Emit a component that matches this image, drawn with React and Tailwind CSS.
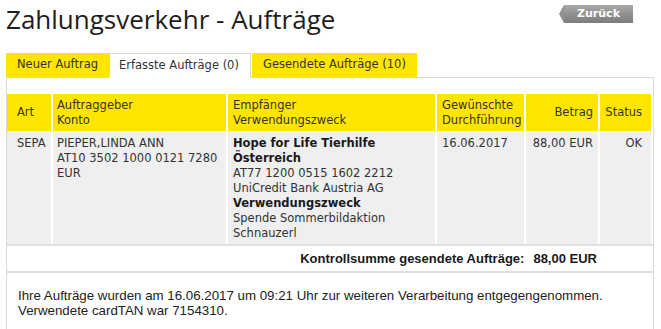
export default function App() {
  const sans = "font-['DejaVu_Sans',sans-serif]";
  return (
    <div className="w-[661px] h-[329px] overflow-hidden bg-white pl-[6px] pr-[7px] text-[#2b2b2b]">
      <div className="flex justify-between items-start">
        <h1 className="pt-[6px] text-[26px] leading-[26px] font-['Open_Sans',sans-serif] font-normal text-[#1e1e1e]">
          Zahlungsverkehr - Aufträge
        </h1>
        <div className="mt-[5px] mr-[21px] flex">
          <div className="w-0 h-0 border-y-[9px] border-y-transparent border-r-[5px] border-r-[#929292]"></div>
          <div className={`w-[69px] h-[18px] bg-gradient-to-b from-[#a8a8a8] to-[#7c7c7c] text-white font-bold text-[11px] leading-[18px] text-center ${sans}`}>
            Zurück
          </div>
        </div>
      </div>

      <div className={`mt-[21px] flex items-end text-[11.5px] ${sans} text-[#333]`}>
        <div className="w-[103px] h-[24px] bg-[#ffe500] pl-[11px] flex items-center">Neuer Auftrag</div>
        <div className="w-[142px] h-[25px] -mb-px bg-white border border-b-0 border-[#d6d6d6] pl-[9px] flex items-center relative z-10">
          Erfasste Aufträge (0)
        </div>
        <div className="ml-[1px] w-[165px] h-[24px] bg-[#ffe500] pl-[11px] flex items-center">Gesendete Aufträge (10)</div>
      </div>

      <div className="border border-b-0 border-[#d9d9d9] pt-[16px] pb-[30px]">
        <div className={`grid grid-cols-[44px_173px_207px_87px_72px_51px] gap-x-[2px] text-[11.5px] leading-[15px] ${sans} text-[#333]`}>
          <div className="h-[37px] bg-[#ffe500] pl-[10px] flex items-center">Art</div>
          <div className="h-[37px] bg-[#ffe500] pl-[4px] flex items-center">Auftraggeber<br />Konto</div>
          <div className="h-[37px] bg-[#ffe500] pl-[5px] flex items-center">Empfänger<br />Verwendungszweck</div>
          <div className="h-[37px] bg-[#ffe500] pl-[5px] flex items-center whitespace-nowrap">Gewünschte<br />Durchführung</div>
          <div className="h-[37px] bg-[#ffe500] pr-[5px] flex items-center justify-end">Betrag</div>
          <div className="h-[37px] bg-[#ffe500] pr-[9px] flex items-center justify-end">Status</div>

          <div className="bg-[#efefef] pl-[10px] pt-[5px] pb-[3px]">SEPA</div>
          <div className="bg-[#efefef] pl-[4px] pt-[5px] pb-[3px] whitespace-nowrap">
            PIEPER,LINDA ANN<br />AT10 3502 1000 0121 7280<br />EUR
          </div>
          <div className="bg-[#efefef] pl-[5px] pt-[5px] pb-[3px] whitespace-nowrap">
            <span className="font-bold text-[#1a1a1a]">Hope for Life Tierhilfe<br />Österreich</span><br />
            AT77 1200 0515 1602 2212<br />
            UniCredit Bank Austria AG<br />
            <span className="font-bold text-[#1a1a1a]">Verwendungszweck</span><br />
            Spende Sommerbildaktion<br />
            Schnauzerl
          </div>
          <div className="bg-[#efefef] pl-[5px] pt-[5px] pb-[3px]">16.06.2017</div>
          <div className="bg-[#efefef] pr-[5px] pt-[5px] pb-[3px] text-right whitespace-nowrap">88,00 EUR</div>
          <div className="bg-[#efefef] pr-[9px] pt-[5px] pb-[3px] text-right">OK</div>
        </div>

        <div className="border-t-2 border-[#e0e0e0] h-[27px] flex items-center justify-end pr-[56px] font-['Liberation_Sans',sans-serif] font-bold text-[13px] text-[#1a1a1a] gap-[9px]">
          <span>Kontrollsumme gesendete Aufträge:</span>
          <span>88,00 EUR</span>
        </div>

        <div className="border-t-2 border-[#e0e0e0] pt-[15px] pl-[11px] font-['Liberation_Sans',sans-serif] text-[13.3px] leading-[15px] text-[#222]">
          Ihre Aufträge wurden am 16.06.2017 um 09:21 Uhr zur weiteren Verarbeitung entgegengenommen.<br />
          Verwendete cardTAN war 7154310.
        </div>
      </div>
    </div>
  );
}
